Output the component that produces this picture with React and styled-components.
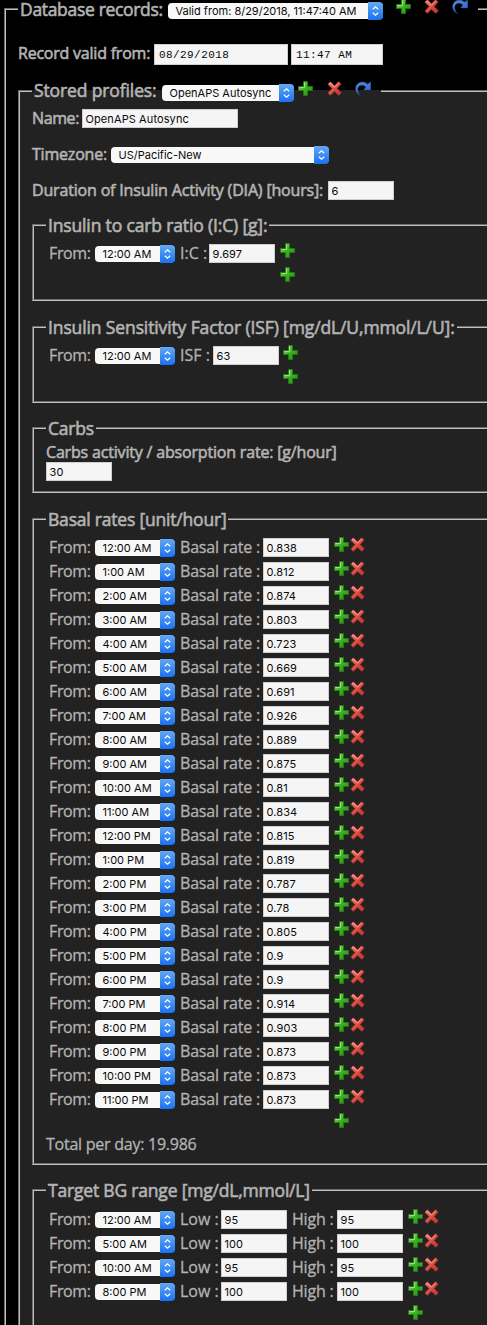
import React from "react";
import styled, { createGlobalStyle } from "styled-components";

const GlobalStyle = createGlobalStyle`
  html, body { margin: 0; padding: 0; background: #000; }
  body { overflow: hidden; color: #b3b3b3; font-family: "Open Sans", "Noto Sans", sans-serif; }
  * { box-sizing: border-box; }
`;

const Page = styled.main`
  width: 487px;
  height: 1325px;
  padding-left: 4px;
  overflow: hidden;
`;

const Group = styled.fieldset`
  width: ${(p) => p.$width || 540}px;
  height: ${(p) => p.$height}px;
  margin: ${(p) => p.$top || 0}px 0 0;
  padding: 0 12px;
  border: 2px groove #c0c0c0;
  background: ${(p) => p.$bg || "transparent"};
`;

const Legend = styled.legend`
  display: flex;
  align-items: flex-start;
  height: ${(p) => p.$height || 22}px;
  padding: 0 2px;
`;

const Label = styled.span`
  flex: none;
  display: block;
  width: ${(p) => p.$width}px;
  margin-top: ${(p) => p.$top || 0}px;
  font-size: 16px;
  line-height: 20px;
  letter-spacing: ${(p) => p.$spacing || 0}px;
  white-space: nowrap;
  -webkit-text-stroke: ${(p) => (p.$strong ? 0.6 : 0.3)}px #b3b3b3;
`;

const Title = styled(Label)`
  width: ${(p) => (p.$width ? p.$width + "px" : "auto")};
  font-size: 17.5px;
  line-height: ${(p) => p.$line || 22}px;
  -webkit-text-stroke: 0.6px #b3b3b3;
`;

const Line = styled.div`
  display: flex;
  align-items: flex-start;
  height: ${(p) => p.$height || 19}px;
  margin-top: ${(p) => p.$top}px;
`;

const Rows = styled.div`
  padding: ${(p) => p.$top || 7}px 0 0 3px;
`;

const Row = styled.div`
  display: flex;
  align-items: flex-start;
  height: 24px;
  padding-left: ${(p) => p.$indent || 0}px;
`;

const Input = styled.div`
  flex: none;
  width: ${(p) => p.$width || 66}px;
  height: 19px;
  margin: ${(p) => p.$top ?? 1}px ${(p) => p.$gap ?? 5}px 0 0;
  padding-left: 2.5px;
  border: 1px solid #cfcfcf;
  background: #f5f5f5;
  color: #0a0a0a;
  font: 11px/18px Inter, sans-serif;
  letter-spacing: 0.1px;
  white-space: nowrap;
`;

const DateInput = styled(Input)`
  height: 21px;
  padding-left: 4px;
  font: 11px/20px "Liberation Mono", monospace;
  letter-spacing: 0.42px;
  white-space: pre;
`;

const SelectBox = styled.div`
  flex: none;
  display: flex;
  justify-content: space-between;
  width: ${(p) => p.$width || 80}px;
  height: 16px;
  margin: ${(p) => p.$top ?? 3}px ${(p) => p.$gap ?? 5}px 0 0;
  padding-left: 7.5px;
  border-radius: 4px;
  background: #f8f8f8;
  color: #0a0a0a;
  font: 11px/17px Inter, sans-serif;
  white-space: nowrap;
`;

const Arrows = styled.span`
  display: flex;
  align-items: center;
  justify-content: center;
  width: 15px;
  height: 18px;
  margin-top: -1px;
  border-radius: 0 4px 4px 0;
  background: linear-gradient(#62a9f3, #1a72f2);
`;

const Icon = styled.svg`
  flex: none;
  display: block;
  width: 16px;
  height: 16px;
  margin-top: ${(p) => p.$top || 0}px;
  margin-right: ${(p) => p.$gap || 0}px;
`;

const Select = ({ children, ...rest }) => (
  <SelectBox {...rest}>
    {children}
    <Arrows>
      <svg width="9" height="12" viewBox="0 0 9 12" fill="none" stroke="#fff" strokeWidth="1.2">
        <path d="M1.8 4.3 4.5 1.9 7.2 4.3M1.8 7.7 4.5 10.1 7.2 7.7" />
      </svg>
    </Arrows>
  </SelectBox>
);

const Plus = (props) => (
  <Icon viewBox="0 0 16 16" {...props}>
    <path d="M5.5.5h4v5h5v4h-5v5h-4v-5h-5v-4h5z" fill="url(#green)" stroke="#247c12" strokeWidth=".8" />
    <path d="M6.5 1.5v5h-5" fill="none" stroke="#9be07c" />
  </Icon>
);

const Cross = (props) => (
  <Icon viewBox="0 0 16 16" {...props}>
    <path
      d="M3.3.7 7.5 5 11.6.7 14.1 3 10 7.5l4.2 4.3-2.5 2.5-4.2-4.2-4.1 4.2L.9 12 5.1 7.5.9 3.2z"
      fill="url(#red)"
      stroke="#b23a33"
      strokeWidth=".8"
    />
    <path d="M2 3.1 3.3 1.9l4.2 4.2 4.1-4" fill="none" stroke="#f3a79c" />
  </Icon>
);

const Redo = (props) => (
  <Icon viewBox="0 0 16 16" {...props}>
    <path
      d="M5.4 14.6C1.4 12.6-.3 8.6 1 5.2 2.7.9 8.8-.6 12.6 3.1L15.8.8v8.1H8.6l2.3-2.8C8 3.2 4.6 3.7 3.2 6.3c-1.2 2.4-.3 5.7 2.2 8.3z"
      fill="url(#blue)"
      stroke="#1b438f"
      strokeWidth=".5"
    />
  </Icon>
);

const Gradients = () => (
  <svg width="0" height="0" style={{ display: "block" }}>
    <defs>
      <linearGradient id="green" x1="0" y1="0" x2="1" y2="1">
        <stop offset="0" stopColor="#86da68" />
        <stop offset=".55" stopColor="#35b01d" />
        <stop offset="1" stopColor="#238d12" />
      </linearGradient>
      <linearGradient id="red" x1="0" y1="0" x2="1" y2="1">
        <stop offset="0" stopColor="#f08c80" />
        <stop offset=".55" stopColor="#dd4a40" />
        <stop offset="1" stopColor="#c5302b" />
      </linearGradient>
      <linearGradient id="blue" x1="0" y1="0" x2="1" y2="1">
        <stop offset="0" stopColor="#5b8ee0" />
        <stop offset="1" stopColor="#2f66cc" />
      </linearGradient>
    </defs>
  </svg>
);

const From = ({ time }) => (
  <>
    <Label $width={46} $spacing={-0.35}>From:</Label>
    <Select>{time}</Select>
  </>
);

const hours = Array.from({ length: 24 }, (_, h) => `${h % 12 || 12}:00 ${h < 12 ? "AM" : "PM"}`);
const basal = [
  "0.838", "0.812", "0.874", "0.803", "0.723", "0.669", "0.691", "0.926",
  "0.889", "0.875", "0.81", "0.834", "0.815", "0.819", "0.787", "0.78",
  "0.805", "0.9", "0.9", "0.914", "0.903", "0.873", "0.873", "0.873",
];
const targets = [["12:00 AM", 95], ["5:00 AM", 100], ["10:00 AM", 95], ["8:00 PM", 100]];

export default function App() {
  return (
    <Page>
      <GlobalStyle />
      <Gradients />
      <Group $height={1400}>
        <Legend $height={18}>
          <Title $width={148} $line={18} $spacing={-0.32}>Database records:</Title>
          <Select $width={215} $gap={13}>Valid from: 8/29/2018, 11:47:40 AM</Select>
          <Plus $top={-1} $gap={12} />
          <Cross $top={-1} $gap={12} />
          <Redo $top={-1} $gap={8} />
        </Legend>

        <Line $top={26} $height={21}>
          <Label $strong $width={136} $top={-1} $spacing={-0.22}>Record valid from:</Label>
          <DateInput $top={0} $width={134} $gap={3}>08/29/2018</DateInput>
          <DateInput $top={0} $width={92}>11:47 AM</DateInput>
        </Line>

        <Group $top={15} $height={1300} $bg="#222">
          <Legend>
            <Title $width={128} $top={-1} $spacing={-0.12}>Stored profiles:</Title>
            <Select $width={132} $top={5} $gap={4}>OpenAPS Autosync</Select>
            <Plus $top={1} $gap={13} />
            <Cross $top={1} $gap={12} />
            <Redo $top={1} $gap={8} />
          </Legend>

          <Line $top={7}>
            <Label $strong $width={50} $top={-1} $spacing={-0.4}>Name:</Label>
            <Input $top={0} $width={156}>OpenAPS Autosync</Input>
          </Line>
          <Line $top={18}>
            <Label $strong $width={79} $top={-2} $spacing={-0.2}>Timezone:</Label>
            <Select $width={218} $top={1}>US/Pacific-New</Select>
          </Line>
          <Line $top={16}>
            <Label $strong $width={296} $top={-1} $spacing={-0.17}>Duration of Insulin Activity (DIA) [hours]:</Label>
            <Input $top={0}>6</Input>
          </Line>

          <Group $top={14} $height={87}>
            <Legend><Title $spacing={-0.15}>Insulin to carb ratio (I:C) [g]:</Title></Legend>
            <Rows>
              <Row>
                <From time="12:00 AM" />
                <Label $width={29}>I:C :</Label>
                <Input>9.697</Input>
                <Plus />
              </Row>
              <Row $indent={231}><Plus /></Row>
            </Rows>
          </Group>

          <Group $top={15} $height={87}>
            <Legend><Title $spacing={-0.12}>Insulin Sensitivity Factor (ISF) [mg/dL/U,mmol/L/U]:</Title></Legend>
            <Rows>
              <Row>
                <From time="12:00 AM" />
                <Label $width={33}>ISF :</Label>
                <Input $gap={4}>63</Input>
                <Plus />
              </Row>
              <Row $indent={234}><Plus /></Row>
            </Rows>
          </Group>

          <Group $top={14} $height={76}>
            <Legend><Title $spacing={-0.2}>Carbs</Title></Legend>
            <Line $top={3} $height={20}>
              <Label $strong $width={295} $spacing={-0.18}>Carbs activity / absorption rate: [g/hour]</Label>
            </Line>
            <Line $top={0}><Input $top={0}>30</Input></Line>
          </Group>

          <Group $top={15} $height={657}>
            <Legend><Title $spacing={-0.2}>Basal rates [unit/hour]</Title></Legend>
            <Rows>
              {basal.map((rate, i) => (
                <Row key={i}>
                  <From time={hours[i]} />
                  <Label $width={83} $spacing={-0.2}>Basal rate :</Label>
                  <Input>{rate}</Input>
                  <Plus />
                  <Cross />
                </Row>
              ))}
              <Row $indent={285}><Plus /></Row>
            </Rows>
            <Line $top={-3}>
              <Label $width={160} $spacing={-0.25}>Total per day: 19.986</Label>
            </Line>
          </Group>

          <Group $top={14} $height={200}>
            <Legend><Title $spacing={-0.19}>Target BG range [mg/dL,mmol/L]</Title></Legend>
            <Rows $top={8}>
              {targets.map(([time, value]) => (
                <Row key={time}>
                  <From time={time} />
                  <Label $width={41}>Low :</Label>
                  <Input>{value}</Input>
                  <Label $width={45} $spacing={-0.2}>High :</Label>
                  <Input>{value}</Input>
                  <Plus />
                  <Cross />
                </Row>
              ))}
              <Row $indent={359}><Plus /></Row>
            </Rows>
          </Group>
        </Group>
      </Group>
    </Page>
  );
}
